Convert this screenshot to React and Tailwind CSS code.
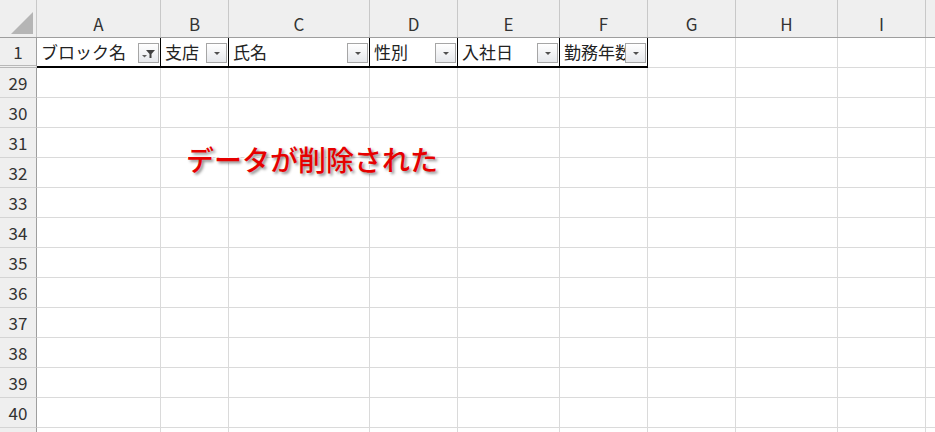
import React from 'react';

const cols = [
  { name: 'A', w: 124 },
  { name: 'B', w: 68 },
  { name: 'C', w: 141 },
  { name: 'D', w: 88 },
  { name: 'E', w: 102 },
  { name: 'F', w: 88 },
  { name: 'G', w: 88 },
  { name: 'H', w: 102 },
  { name: 'I', w: 88 },
  { name: '', w: 40 },
];

const headers = ['ブロック名', '支店', '氏名', '性別', '入社日', '勤務年数'];
const rows = [29, 30, 31, 32, 33, 34, 35, 36, 37, 38, 39, 40, ''];

function DropButton({ filtered }) {
  return (
    <div className="absolute right-[1px] top-[5px] w-[21px] h-[20px] border border-[#a6a6a6] bg-gradient-to-b from-white to-[#e6e8ec] flex items-center justify-center">
      {filtered ? (
        <svg width="15" height="13" viewBox="0 0 15 13">
          <path d="M5 3 H14 L10.5 7 V11 H8.5 V7 Z" fill="#404040" />
          <path d="M1 8 H6 L3.5 10.5 Z" fill="#606060" />
        </svg>
      ) : (
        <svg width="8" height="5" viewBox="0 0 8 5">
          <path d="M1 1 H7 L4 4 Z" fill="#505050" />
        </svg>
      )}
    </div>
  );
}

export default function App() {
  return (
    <div
      className="relative w-[935px] h-[432px] overflow-hidden bg-white text-[#222]"
      style={{ fontFamily: '"Noto Sans CJK JP", "Noto Sans", sans-serif' }}
    >
      {/* Column headers */}
      <div className="flex h-[38px] bg-[#efefef] border-b border-[#9e9e9e]">
        <div className="w-[37px] shrink-0 border-r border-[#c8c8c8] relative">
          <svg className="absolute left-[11px] top-[12px]" width="22" height="22" viewBox="0 0 22 22">
            <path d="M22 0 V22 H0 Z" fill="#b5b5b5" />
          </svg>
        </div>
        {cols.map((c, i) => (
          <div
            key={i}
            style={{ width: c.w }}
            className="shrink-0 border-r border-[#c8c8c8] flex items-end justify-center pb-[5px] text-[17px] leading-none text-[#333]"
          >
            {c.name}
          </div>
        ))}
      </div>

      {/* Row 1: table header */}
      <div className="flex h-[30px]">
        <div className="w-[37px] shrink-0 bg-[#efefef] border-r border-[#9e9e9e] border-b-[3px] border-double border-b-[#b8b8b8] flex items-center justify-center text-[17px] text-[#333]">
          1
        </div>
        {cols.map((c, i) => {
          const isHead = i < 6;
          return (
            <div
              key={i}
              style={{ width: c.w }}
              className={
                isHead
                  ? 'relative shrink-0 border-r border-black border-b-2 border-b-black overflow-hidden'
                  : 'shrink-0 border-r border-b border-[#dadada]'
              }
            >
              {isHead && (
                <>
                  <div className="pl-[4px] pt-[2px] text-[17px] leading-[24px] whitespace-nowrap">
                    {headers[i]}
                  </div>
                  <DropButton filtered={i === 0} />
                </>
              )}
            </div>
          );
        })}
      </div>

      {/* Data rows */}
      {rows.map((r, idx) => (
        <div key={idx} className="flex h-[30px]">
          <div className="w-[37px] shrink-0 bg-[#efefef] border-r border-[#9e9e9e] border-b border-b-[#d4d4d4] flex items-center justify-center text-[17px] text-[#333]">
            {r}
          </div>
          {cols.map((c, i) => (
            <div
              key={i}
              style={{ width: c.w }}
              className="shrink-0 border-r border-b border-[#dadada]"
            />
          ))}
        </div>
      ))}

      {/* Annotation */}
      <div
        className="absolute left-[186px] top-[139px] text-[28px] leading-[40px] font-medium text-[#e60000] whitespace-nowrap"
        style={{
          textShadow:
            '2px 2px 3px rgba(0,0,0,0.45), 0 0 2px #fff, 0 0 3px #fff, 1px 1px 0 #fff, -1px -1px 0 #fff, 1px -1px 0 #fff, -1px 1px 0 #fff',
        }}
      >
        データが削除された
      </div>
    </div>
  );
}
